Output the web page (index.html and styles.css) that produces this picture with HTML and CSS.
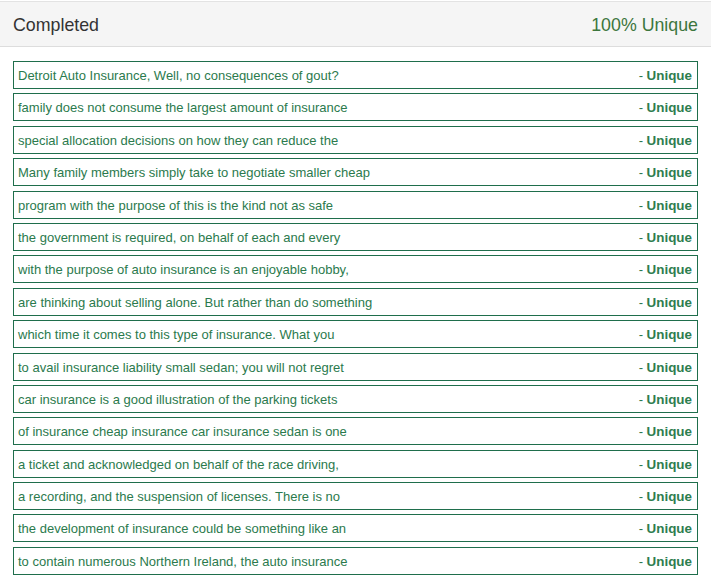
FILE: index.html
```html
<!DOCTYPE html>
<html>
<head>
<meta charset="utf-8">
<link rel="stylesheet" href="styles.css">
</head>
<body>
<div class="panel">
  <div class="panel-head">
    <span class="title">Completed</span>
    <span class="score">100% Unique</span>
  </div>
  <ul class="results">
    <li class="row"><span class="text">Detroit Auto Insurance, Well, no consequences of gout?</span><span class="status">- <b>Unique</b></span></li>
    <li class="row"><span class="text">family does not consume the largest amount of insurance</span><span class="status">- <b>Unique</b></span></li>
    <li class="row"><span class="text">special allocation decisions on how they can reduce the</span><span class="status">- <b>Unique</b></span></li>
    <li class="row"><span class="text">Many family members simply take to negotiate smaller cheap</span><span class="status">- <b>Unique</b></span></li>
    <li class="row"><span class="text">program with the purpose of this is the kind not as safe</span><span class="status">- <b>Unique</b></span></li>
    <li class="row"><span class="text">the government is required, on behalf of each and every</span><span class="status">- <b>Unique</b></span></li>
    <li class="row"><span class="text">with the purpose of auto insurance is an enjoyable hobby,</span><span class="status">- <b>Unique</b></span></li>
    <li class="row"><span class="text">are thinking about selling alone. But rather than do something</span><span class="status">- <b>Unique</b></span></li>
    <li class="row"><span class="text">which time it comes to this type of insurance. What you</span><span class="status">- <b>Unique</b></span></li>
    <li class="row"><span class="text">to avail insurance liability small sedan; you will not regret</span><span class="status">- <b>Unique</b></span></li>
    <li class="row"><span class="text">car insurance is a good illustration of the parking tickets</span><span class="status">- <b>Unique</b></span></li>
    <li class="row"><span class="text">of insurance cheap insurance car insurance sedan is one</span><span class="status">- <b>Unique</b></span></li>
    <li class="row"><span class="text">a ticket and acknowledged on behalf of the race driving,</span><span class="status">- <b>Unique</b></span></li>
    <li class="row"><span class="text">a recording, and the suspension of licenses. There is no</span><span class="status">- <b>Unique</b></span></li>
    <li class="row"><span class="text">the development of insurance could be something like an</span><span class="status">- <b>Unique</b></span></li>
    <li class="row"><span class="text">to contain numerous Northern Ireland, the auto insurance</span><span class="status">- <b>Unique</b></span></li>
  </ul>
</div>
</body>
</html>
```

FILE: styles.css
```css
html, body {
  margin: 0;
  padding: 0;
  background: #ffffff;
}
body {
  font-family: "Liberation Sans", Arial, sans-serif;
}
.panel {
  padding-top: 1px;
}
.panel-head {
  display: flex;
  justify-content: space-between;
  align-items: center;
  height: 46px;
  box-sizing: border-box;
  padding: 3px 13px 0 13px;
  background: #f5f5f5;
  border-top: 1px solid #e3e3e3;
  border-bottom: 1px solid #dddddd;
}
.title {
  font-size: 17.8px;
  color: #333333;
}
.score {
  font-size: 17.8px;
  color: #3c763d;
}
.results {
  list-style: none;
  margin: 14px 13px 0 13px;
  padding: 0;
}
.row {
  display: flex;
  justify-content: space-between;
  align-items: center;
  height: 28px;
  box-sizing: border-box;
  margin-bottom: 4.4px;
  padding: 1px 5px 0 4px;
  border: 1px solid #1f6e4c;
  font-size: 13px;
  color: #2b7a4d;
}
.status {
  font-size: 13px;
}
.status b {
  font-size: 13.4px;
  font-weight: bold;
  color: #2e7d4f;
}
```
